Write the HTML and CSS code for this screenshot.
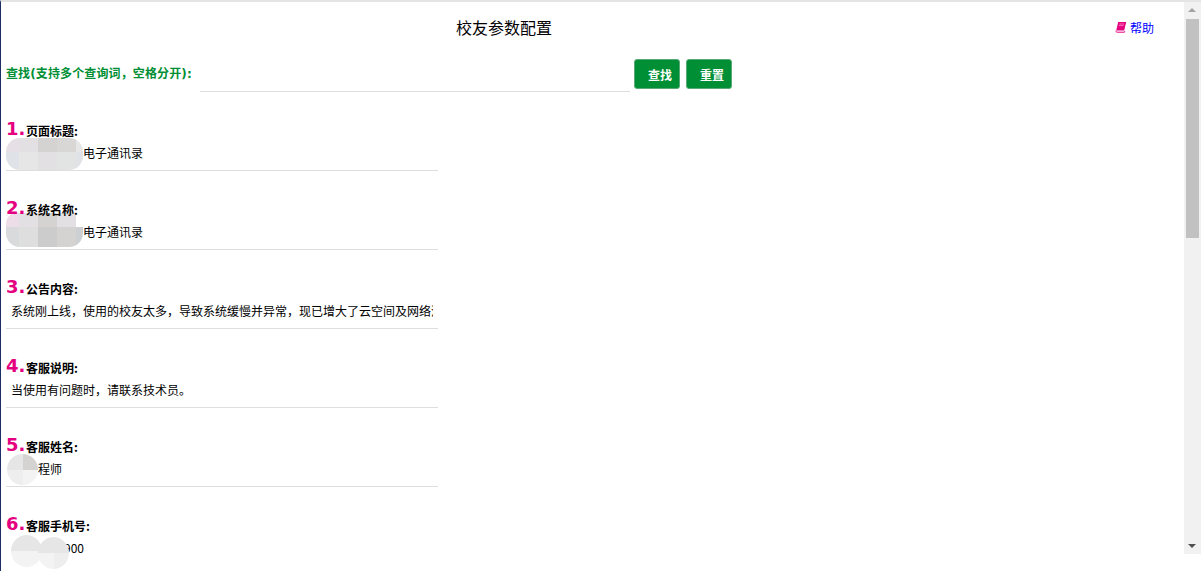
FILE: index.html
```html
<!DOCTYPE html>
<html lang="zh-CN">
<head>
<meta charset="utf-8">
<title>校友参数配置</title>
<link rel="stylesheet" href="styles.css">
</head>
<body>
<div class="frame">
  <main class="content">
    <header class="title-row">
      <h1 class="title">校友参数配置</h1>
      <a class="help" href="#">
        <svg class="help-icon" viewBox="0 0 12 12" aria-hidden="true"><path d="M3.2 1h8l-2 8.6H1.2z" fill="#e5007f"/><path d="M1.2 9.6c-.5 1 0 1.6 1 1.6h7.3l.3-1" fill="none" stroke="#e5007f" stroke-width="1"/><path d="M4.4 3h4.6M4 4.6h4.6" stroke="#ff9ccf" stroke-width=".7"/></svg>
        <span>帮助</span>
      </a>
    </header>
    <form class="search">
      <label class="search-label">查找(支持多个查询词，空格分开):</label>
      <div class="search-input"></div>
      <button class="btn" type="button">查找</button>
      <button class="btn" type="button">重置</button>
    </form>
    <section class="item">
      <div class="label"><b class="num">1.</b>页面标题:</div>
      <div class="value offset-6"><span class="clip">电子通讯录</span>
        <div class="mosaic m1"><i class="c1"></i><i class="c2"></i><i class="c3"></i><i class="c3b"></i><i class="c5"></i><i class="c4"></i><i class="c5"></i><i class="c2"></i><i class="c4b"></i><i class="c4"></i></div>
      </div>
    </section>
    <section class="item">
      <div class="label"><b class="num">2.</b>系统名称:</div>
      <div class="value offset-6"><span class="clip">电子通讯录</span>
        <div class="mosaic m2"><i class="c1b"></i><i class="c2"></i><i class="c3"></i><i class="c2"></i><i class="c0"></i><i class="c6"></i><i class="c6b"></i><i class="c7"></i><i class="c3"></i><i class="c7b"></i></div>
      </div>
    </section>
    <section class="item">
      <div class="label"><b class="num">3.</b>公告内容:</div>
      <div class="value"><span class="clip">系统刚上线，使用的校友太多，导致系统缓慢并异常，现已增大了云空间及网络流量</span></div>
    </section>
    <section class="item">
      <div class="label"><b class="num">4.</b>客服说明:</div>
      <div class="value"><span class="clip">当使用有问题时，请联系技术员。</span></div>
    </section>
    <section class="item">
      <div class="label"><b class="num">5.</b>客服姓名:</div>
      <div class="value offset-name"><span class="clip">程师</span>
        <div class="mosaic m5"><i class="c5"></i><i class="c3"></i><i class="c8"></i><i class="c9"></i></div>
      </div>
    </section>
    <section class="item item-last">
      <div class="label"><b class="num">6.</b>客服手机号:</div>
      <div class="value offset-phone"><span class="clip">900</span>
        <div class="mosaic m6a"><i class="c5"></i><i class="c5"></i><i class="c9"></i><i class="c9"></i></div>
        <div class="mosaic m6b"><i class="c5"></i><i class="c5"></i><i class="c9"></i><i class="c8"></i></div>
      </div>
    </section>
  </main>
  <div class="scrollbar" aria-hidden="true">
    <div class="arrow arrow-up"></div>
    <div class="thumb"></div>
    <div class="track-rest"></div>
    <div class="arrow arrow-down"></div>
  </div>
</div>
</body>
</html>
```
FILE: styles.css
```css
* { box-sizing: border-box; }
html, body { margin: 0; height: 571px; overflow: hidden; background: #fff; }
body { font-family: "Noto Sans CJK SC", "Liberation Sans", sans-serif; font-size: 12px; color: #000; }

.frame {
  display: grid;
  grid-template-columns: 1fr 17px;
  height: 571px;
  border-left: 1px solid #1c2f66;
  border-top: 2px solid #e4e4e4;
}
.content { min-width: 0; padding-left: 5px; overflow: hidden; }

.title-row { display: flex; align-items: center; height: 50px; padding-left: 450px; }
.title { margin: 0; font-size: 16px; font-weight: 400; line-height: 50px; }
.help { display: flex; align-items: center; gap: 3px; margin-left: 563px; color: #0000ff; text-decoration: none; font-size: 12px; }
.help-icon { width: 12px; height: 12px; }

.search { display: flex; align-items: flex-start; height: 40px; }
.search-label {
  width: 194px; height: 30px; margin-top: 7px; line-height: 30px;
  font-family: "DejaVu Sans", "Noto Sans CJK SC", sans-serif;
  font-weight: 700; color: #008f35; white-space: nowrap; letter-spacing: 0.12px;
}
.search-input { width: 430px; height: 40px; border-bottom: 1px solid #dedede; margin-right: 4px; }
.btn {
  width: 46px; height: 30px; margin: 7px 6px 0 0; padding: 0 0 0 13px;
  background: #008f35; border: 1px solid #5aa876; border-radius: 3px;
  color: #fff; font: 700 12px "Noto Sans CJK SC", sans-serif; text-align: left; white-space: nowrap;
}

.item { width: 432px; height: 79px; padding-top: 28px; }
.label { position: relative; z-index: 1; display: flex; align-items: center; height: 20px; font-weight: 700; white-space: nowrap; }
.num { width: 20px; margin-bottom: 2px; font: 700 18px/20px "DejaVu Sans", sans-serif; color: #e5007f; }
.value {
  position: relative; height: 31px; padding: 0 5px;
  line-height: 26px; border-bottom: 1px solid #dedede; white-space: nowrap;
}
.item-last .value { border-bottom: 0; }
.clip { display: block; overflow: hidden; }
.offset-6 { padding-left: 77px; }
.offset-name { padding-left: 32px; }
.offset-phone { padding-left: 58px; }

.mosaic { position: absolute; display: grid; overflow: hidden; }
.mosaic i { display: block; }
.m1, .m2 { left: 0; width: 77px; grid-template-columns: 13px 19px 19px 19px 7px; }
.m1 { top: -2px; height: 32px; grid-template-rows: 14px 18px; border-radius: 14px; }
.m2 { top: -6px; height: 34px; grid-template-rows: 14px 20px; border-radius: 10px 6px 14px 14px; }
.m5, .m6a, .m6b { grid-template: 1fr 1fr / 1fr 1fr; border-radius: 50%; }
.m5 { left: 1px; top: -2px; width: 31px; height: 31px; }
.m6a { left: 5px; top: 0; width: 31px; height: 32px; }
.m6b { left: 32px; top: 2px; width: 31px; height: 32px; }
.c0 { background: transparent; }
.c1 { background: #e6dfe6; }
.c1b { background: #ecdde8; }
.c2 { background: #e2e0e2; }
.c3 { background: #d5d3d2; }
.c3b { background: #d8d7d6; }
.c4 { background: #dfe2e6; }
.c4b { background: #e2e4e4; }
.c5 { background: #e6e6e6; }
.c6 { background: #d9dadb; }
.c6b { background: #dedede; }
.c7 { background: #cccccc; }
.c7b { background: #cdd0d3; }
.c8 { background: #eeeeee; }
.c9 { background: #f3f3f3; }

.scrollbar { display: flex; flex-direction: column; height: 552px; background: #f1f1f1; }
.arrow { position: relative; height: 17px; }
.arrow::after {
  content: ""; position: absolute; left: 4px; width: 0; height: 0;
  border-left: 4px solid transparent; border-right: 4px solid transparent;
}
.arrow-up::after { top: 6px; border-bottom: 4px solid #a3a3a3; }
.arrow-down::after { top: 7px; border-top: 4px solid #505050; }
.thumb { height: 219px; margin: 0 2px; background: #c1c1c1; }
.track-rest { flex: 1; }
```
